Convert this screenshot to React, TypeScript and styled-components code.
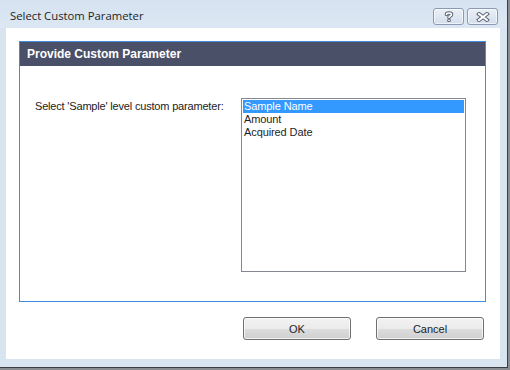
import React, { useState } from 'react'
import styled, { createGlobalStyle } from 'styled-components'

const GlobalStyle = createGlobalStyle`
  html, body {
    margin: 0;
    padding: 0;
    background: #8a8d92;
    width: 510px;
    height: 370px;
    overflow: hidden;
  }
`

const UI_FONT = `Tahoma, 'Liberation Sans', Arial, sans-serif`

const Window = styled.div`
  width: 507px;
  height: 367px;
  display: flex;
  flex-direction: column;
  background: #d9e4f1;
  border-right: 1px solid #3b3f45;
  border-bottom: 1px solid #3b3f45;
`

const TitleBar = styled.div`
  height: 28px;
  flex-shrink: 0;
  display: flex;
  align-items: center;
  justify-content: space-between;
  padding: 0 9px 0 10px;
  background: linear-gradient(#d6e2f0, #dce7f3);
  box-sizing: border-box;
`

const Caption = styled.span`
  font-family: 'Open Sans', 'Noto Sans', sans-serif;
  font-size: 11.3px;
  color: #1e1e1e;
  margin-top: 2px;
`

const CaptionButtons = styled.div`
  display: flex;
  gap: 3px;
  align-self: flex-start;
  margin-top: 8px;
`

const CaptionButton = styled.button`
  width: 31px;
  height: 17px;
  padding: 0;
  display: flex;
  align-items: center;
  justify-content: center;
  border: 1px solid #8b9ab2;
  border-radius: 3px;
  background: linear-gradient(#ebf0f7 0%, #dfe7f2 50%, #d3deec 100%);
  box-shadow: inset 0 0 0 1px rgba(255, 255, 255, 0.6);
`

const Client = styled.div`
  flex: 1;
  margin: 0 7px 8px 6px;
  background: #ffffff;
  display: flex;
  flex-direction: column;
  padding: 13px 0 0 13px;
`

const GroupBox = styled.div`
  width: 467px;
  height: 261px;
  box-sizing: border-box;
  border: 1px solid #3d8ee0;
  display: flex;
  flex-direction: column;
`

const GroupHeader = styled.div`
  height: 24px;
  flex-shrink: 0;
  background: #4a5068;
  color: #ffffff;
  font-family: ${UI_FONT};
  font-weight: bold;
  font-size: 12px;
  display: flex;
  align-items: center;
  padding-left: 7px;
`

const GroupBody = styled.div`
  display: flex;
  padding: 32px 0 0 15px;
`

const FieldLabel = styled.label`
  width: 206px;
  font-family: ${UI_FONT};
  font-size: 11px;
  line-height: 13px;
  letter-spacing: -0.18px;
  color: #222222;
  padding-top: 2px;
`

const ListBox = styled.div`
  width: 225px;
  height: 174px;
  box-sizing: border-box;
  border: 1px solid #828790;
  padding: 1px;
  display: flex;
  flex-direction: column;
`

const ListItem = styled.div<{ $selected: boolean }>`
  height: 13px;
  line-height: 13px;
  padding-left: 1px;
  font-family: ${UI_FONT};
  font-size: 11px;
  letter-spacing: -0.1px;
  color: ${({ $selected }) => ($selected ? '#ffffff' : '#1e1e1e')};
  background: ${({ $selected }) => ($selected ? '#3399ff' : 'transparent')};
  cursor: default;
  white-space: nowrap;
`

const ButtonRow = styled.div`
  display: flex;
  justify-content: flex-end;
  gap: 25px;
  margin-top: 15px;
  padding-right: 16px;
`

const DialogButton = styled.button`
  width: 108px;
  height: 23px;
  padding: 0;
  border: 1px solid #707070;
  border-radius: 3px;
  background: linear-gradient(#f2f2f2 0%, #ebebeb 50%, #dddddd 51%, #cfcfcf 100%);
  box-shadow: inset 0 0 0 1px rgba(255, 255, 255, 0.7);
  font-family: ${UI_FONT};
  font-size: 11px;
  color: #1e1e1e;
`

const HelpGlyph = () => (
  <svg width="12" height="11" viewBox="0 0 12 11">
    <g fill="none" strokeLinecap="round" strokeLinejoin="round">
      <path d="M3.5 3.5 C3.5 1.5 8.5 1.5 8.5 3.5 C8.5 5 6 5 6 6.5" stroke="#5b6474" strokeWidth="3.6" />
      <path d="M6 9.3 L6 9.4" stroke="#5b6474" strokeWidth="3.6" />
      <path d="M3.5 3.5 C3.5 1.5 8.5 1.5 8.5 3.5 C8.5 5 6 5 6 6.5" stroke="#ffffff" strokeWidth="1.6" />
      <path d="M6 9.3 L6 9.4" stroke="#ffffff" strokeWidth="1.6" />
    </g>
  </svg>
)

const CloseGlyph = () => (
  <svg width="14" height="10" viewBox="0 0 14 10">
    <g fill="none" strokeLinecap="square">
      <path d="M3 2 L11 8 M11 2 L3 8" stroke="#5b6474" strokeWidth="4" />
      <path d="M3 2 L11 8 M11 2 L3 8" stroke="#ffffff" strokeWidth="2" />
    </g>
  </svg>
)

const items = ['Sample Name', 'Amount', 'Acquired Date']

export default function App() {
  const [selected, setSelected] = useState(0)

  return (
    <>
      <GlobalStyle />
      <Window>
        <TitleBar>
          <Caption>Select Custom Parameter</Caption>
          <CaptionButtons>
            <CaptionButton title="Help">
              <HelpGlyph />
            </CaptionButton>
            <CaptionButton title="Close">
              <CloseGlyph />
            </CaptionButton>
          </CaptionButtons>
        </TitleBar>
        <Client>
          <GroupBox>
            <GroupHeader>Provide Custom Parameter</GroupHeader>
            <GroupBody>
              <FieldLabel>Select 'Sample' level custom parameter:</FieldLabel>
              <ListBox>
                {items.map((item, i) => (
                  <ListItem key={item} $selected={i === selected} onClick={() => setSelected(i)}>
                    {item}
                  </ListItem>
                ))}
              </ListBox>
            </GroupBody>
          </GroupBox>
          <ButtonRow>
            <DialogButton>OK</DialogButton>
            <DialogButton>Cancel</DialogButton>
          </ButtonRow>
        </Client>
      </Window>
    </>
  )
}
